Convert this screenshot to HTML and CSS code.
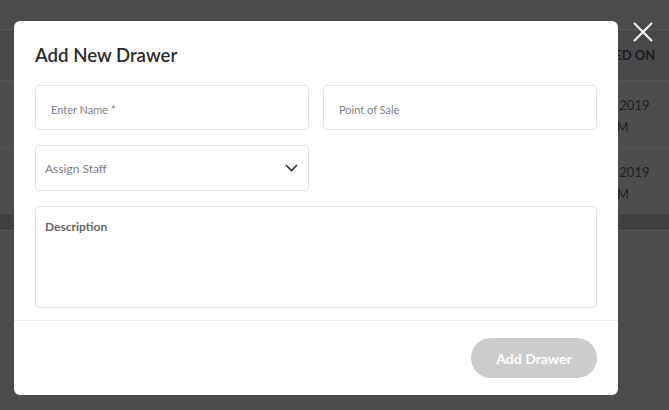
FILE: index.html
```html
<!DOCTYPE html>
<html>
<head>
<meta charset="utf-8">
<link rel="stylesheet" href="styles.css">
</head>
<body>
<div class="page">
  <div class="topbar"></div>
  <div class="table">
    <div class="thead"><span class="cell">CREATED ON</span></div>
    <div class="trow"><span class="cell">Aug 15, 2019<br>12:30 PM</span></div>
    <div class="trow"><span class="cell">Aug 14, 2019<br>10:15 AM</span></div>
    <div class="tfoot"></div>
  </div>
</div>

<div class="close" aria-label="Close">
  <svg width="20" height="20" viewBox="0 0 20 20"><path d="M1 1 L19 19 M19 1 L1 19" stroke="#fff" stroke-width="2" fill="none"/></svg>
</div>

<div class="modal">
  <div class="modal-head"><h2 class="title">Add New Drawer</h2></div>
  <div class="modal-body">
    <div class="row">
      <div class="field field-pad"><span class="ph ph-sm">Enter Name *</span></div>
      <div class="field field-pad"><span class="ph ph-sm">Point of Sale</span></div>
    </div>
    <div class="row">
      <div class="field select"><span class="ph">Assign Staff</span>
        <svg class="chev" width="13" height="8" viewBox="0 0 13 8"><path d="M1 1 L6.5 6.5 L12 1" stroke="#333" stroke-width="1.6" fill="none"/></svg>
      </div>
    </div>
    <div class="textarea"><span class="desc">Description</span></div>
  </div>
  <div class="modal-foot"><button class="btn">Add Drawer</button></div>
</div>
</body>
</html>
```
FILE: styles.css
```css
* { box-sizing: border-box; }
html, body { margin: 0; padding: 0; }
body {
  width: 669px; height: 410px; overflow: hidden;
  background: #4a4b4d;
  font-family: Lato, "Noto Sans", sans-serif;
  position: relative;
}
.page { display: flex; flex-direction: column; }
.topbar { height: 30px; background: #4a4b4d; border-bottom: 1px solid #555658; }
.table { display: flex; flex-direction: column; }
.thead { height: 50px; background: #48494b; display: flex; align-items: center; padding-left: 574px; }
.thead .cell { font-size: 13px; font-weight: 700; color: #1c1c1c; }
.trow { height: 67px; background: #4d4d4e; border-top: 1px solid #545456; display: flex; align-items: center; padding: 4px 0 0 572px; }
.trow .cell { font-size: 13px; color: #1e1e1e; line-height: 22px; }
.tfoot { height: 17px; background: #3f4042; border-bottom: 1px solid #585859; }

.close { position: absolute; left: 633px; top: 22px; width: 20px; height: 20px; }
.close svg { display: block; }

.modal {
  position: absolute; left: 14px; top: 21px; width: 604px; height: 374px;
  background: #fff; border-radius: 6px;
  display: flex; flex-direction: column;
}
.modal-head { padding: 20px 21px 0; }
.title { margin: 0; font-size: 18.6px; line-height: 28px; font-weight: 600; color: #2b2b2b; }
.modal-body { padding: 16px 21px 12px; display: flex; flex-direction: column; gap: 15px; border-bottom: 1px solid #ececec; }
.row { display: grid; grid-template-columns: 1fr 1fr; gap: 14px; }
.field { height: 45px; border: 1px solid #e4e4e4; border-radius: 4px; display: flex; align-items: center; min-width: 0; }
.field-pad { padding: 4px 0 0 15px; }
.select { padding: 0 9px; justify-content: space-between; height: 46px; }
.ph { font-size: 12px; color: #808080; }
.ph-sm { font-size: 11px; }
.chev { margin-right: 1px; }
.textarea { height: 102px; border: 1px solid #e4e4e4; border-radius: 4px; padding: 10px 9px; line-height: 16px; }
.desc { font-size: 12px; font-weight: 700; color: #666; }
.modal-foot { flex: 1; display: flex; justify-content: flex-end; align-items: flex-start; padding: 17px 21px 0; }
.btn {
  width: 126px; height: 40px; border-radius: 20px; border: none;
  background: #cccccc; color: #fff; font-family: Lato, sans-serif;
  font-size: 14px; font-weight: 700;
}
```
